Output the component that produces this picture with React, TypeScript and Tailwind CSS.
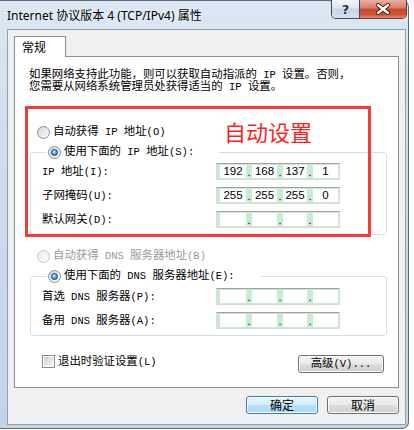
import { Fragment } from 'react';

const simsun = "font-['Liberation_Mono','Noto_Sans_CJK_SC',monospace] text-[11.4px] leading-[12px]";

function T({ s }: { s: string }) {
  const parts = s.split(/([\x20-\x7e]+)/);
  return (
    <>
      {parts.map((p, i) =>
        i % 2 === 1 ? (
          <span key={i} className="text-[10.5px]">
            {p}
          </span>
        ) : (
          <Fragment key={i}>{p}</Fragment>
        ),
      )}
    </>
  );
}

function Radio({ checked, disabled }: { checked?: boolean; disabled?: boolean }) {
  return (
    <span
      className={
        disabled
          ? 'flex h-[13px] w-[13px] shrink-0 items-center justify-center rounded-full border border-[#c4c6c8] bg-[linear-gradient(135deg,#ececec,#fbfbfb)]'
          : 'flex h-[13px] w-[13px] shrink-0 items-center justify-center rounded-full border border-[#8b8d90] bg-[linear-gradient(135deg,#d4d5d6,#fdfdfd)]'
      }
    >
      {checked && (
        <span className="h-[7px] w-[7px] rounded-full border border-[#173f6b] bg-[radial-gradient(circle_at_40%_35%,#d6f1ff_0%,#5aaef0_45%,#1d5fa6_100%)]" />
      )}
    </span>
  );
}

function IpBox({ v }: { v: string[] }) {
  const widths = ['w-[26px]', 'w-[25px]', 'w-[24px]', 'w-[25px]'];
  return (
    <div className="flex h-[17px] w-[124px] shrink-0 border border-[#dadada] border-t-[#a0a0a0] bg-[#c8ecd1] py-[1px] pl-[3px] pr-[1px]">
      {v.map((x, i) => (
        <Fragment key={i}>
          {i > 0 && (
            <span className="flex w-[6px] items-end justify-center font-['Liberation_Sans',sans-serif] text-[11px] leading-[12px] text-black">
              .
            </span>
          )}
          <span
            className={`${widths[i]} flex items-center justify-center bg-white font-['Liberation_Sans',sans-serif] text-[11.5px] leading-[13px] text-black`}
          >
            {x}
          </span>
        </Fragment>
      ))}
    </div>
  );
}

function Row({ label, v, first }: { label: string; v: string[]; first?: boolean }) {
  return (
    <div className={first ? 'flex h-[17px] items-center' : 'mt-[7px] flex h-[17px] items-center'}>
      <span className={`w-[174px] ${simsun} text-black`}>
        <T s={label} />
      </span>
      <IpBox v={v} />
    </div>
  );
}

const btnBase =
  "flex h-[18px] w-[72px] items-center justify-center rounded-[3px] border font-['Noto_Sans_CJK_SC',sans-serif] text-[12px] leading-[14px] text-black shadow-[inset_0_0_0_1px_#fbfbfb]";

export default function App() {
  return (
    <div className="relative h-[430px] w-[414px] overflow-hidden bg-white">
      <div className="flex h-[429px] w-[409px] flex-col rounded-tr-[7px] rounded-br-[7px] border-t border-r border-b border-[#5a6b80] bg-[linear-gradient(180deg,#dce7f3_0%,#cfdcec_35%,#c4d4e6_100%)]">
        {/* title bar */}
        <div className="flex h-[28px] items-start">
          <div className="flex h-[28px] items-center pl-[7px] pt-[1px] font-['Noto_Sans','Noto_Sans_CJK_SC',sans-serif] text-[12px] text-black [text-shadow:0_0_6px_#ffffff]">
            Internet 协议版本 4 (TCP/IPv4) 属性
          </div>
          <div className="ml-auto mr-[1px] -mt-[1px] flex h-[19px] overflow-hidden rounded-b-[5px] border border-t-0 border-[#3a4a5f]">
            <div className="flex w-[28px] items-center justify-center border-r border-[#3a4a5f] bg-[linear-gradient(180deg,#f3f6fa_0%,#dfe6ef_45%,#c8d4e2_50%,#d6e1ed_100%)] font-['DejaVu_Sans',sans-serif] text-[13px] font-bold leading-[13px] text-[#24313f] [text-shadow:0_0_2px_#ffffff]">
              ?
            </div>
            <div className="flex w-[46px] items-center justify-center bg-[linear-gradient(180deg,#eab0a3_0%,#dc7a66_45%,#c8462c_50%,#cf5238_80%,#e08a72_100%)]">
              <svg width="16" height="12" viewBox="0 0 16 12">
                <path d="M3 2 L13 10 M13 2 L3 10" stroke="#4a1a10" strokeWidth="4.2" strokeLinecap="round" />
                <path d="M3 2 L13 10 M13 2 L3 10" stroke="#ffffff" strokeWidth="2.4" strokeLinecap="round" />
              </svg>
            </div>
          </div>
        </div>

        {/* client area */}
        <div className="ml-[7px] flex h-[396px] w-[399px] flex-col border border-[#8fa0b5] bg-[#f0f0f0] px-[6px] pt-[6px] pb-[10px]">
          <div className="relative z-10 -mb-[1px] flex h-[21px] w-[52px] items-center border border-b-0 border-[#898c95] bg-white pl-[7px] font-['Noto_Sans_CJK_SC',sans-serif] text-[12px] leading-[14px] text-black">
            常规
          </div>
          <div className="flex h-[332px] flex-col border border-[#898c95] bg-white">
            {/* description */}
            <div className={`pl-[14px] pt-[12px] ${simsun} whitespace-nowrap text-black`}>
              <T s="如果网络支持此功能，则可以获取自动指派的 IP 设置。否则，" />
              <br />
              <T s="您需要从网络系统管理员处获得适当的 IP 设置。" />
            </div>

            {/* radio 1 */}
            <div className="mt-[31px] flex h-[16px] items-center gap-[3px] pl-[22px]">
              <Radio />
              <span className={`${simsun} text-black`}>
                <T s="自动获得 IP 地址(O)" />
              </span>
            </div>

            {/* group 1 */}
            <fieldset className="mt-[4px] ml-[15px] mr-[11px] rounded-[3px] border border-[#d5dfe5] pb-[6px] pl-[11px]">
              <legend className="ml-[5px] flex h-[16px] w-[172px] items-center gap-[3px] pl-[1px]">
                <Radio checked />
                <span className={`${simsun} text-black`}>
                  <T s="使用下面的 IP 地址(S):" />
                </span>
              </legend>
              <div className="mt-[3px] flex flex-col">
                <Row first label="IP 地址(I):" v={['192', '168', '137', '1']} />
                <Row label="子网掩码(U):" v={['255', '255', '255', '0']} />
                <Row label="默认网关(D):" v={['', '', '', '']} />
              </div>
            </fieldset>

            {/* radio 3 */}
            <div className="mt-[13px] flex h-[16px] items-center gap-[3px] pl-[22px]">
              <Radio disabled />
              <span className={`${simsun} text-[#9a9a9a]`}>
                <T s="自动获得 DNS 服务器地址(B)" />
              </span>
            </div>

            {/* group 2 */}
            <fieldset className="mt-[4px] ml-[15px] mr-[11px] rounded-[3px] border border-[#d5dfe5] pb-[6px] pl-[11px]">
              <legend className="ml-[5px] flex h-[16px] w-[214px] items-center gap-[3px] pl-[1px]">
                <Radio checked />
                <span className={`${simsun} text-black`}>
                  <T s="使用下面的 DNS 服务器地址(E):" />
                </span>
              </legend>
              <div className="mt-[4px] flex flex-col">
                <Row first label="首选 DNS 服务器(P):" v={['', '', '', '']} />
                <Row label="备用 DNS 服务器(A):" v={['', '', '', '']} />
              </div>
            </fieldset>

            {/* checkbox + advanced */}
            <div className="mt-[19px] flex items-start justify-between pl-[27px] pr-[14px]">
              <div className="flex h-[13px] items-center gap-[3px]">
                <span className="flex h-[13px] w-[13px] items-center justify-center border border-[#8b8d90] bg-white">
                  <span className="h-[9px] w-[9px] bg-[linear-gradient(135deg,#cfd0d1,#f7f7f7)]" />
                </span>
                <span className={`${simsun} text-black`}>
                  <T s="退出时验证设置(L)" />
                </span>
              </div>
              <div className="flex h-[18px] w-[86px] items-center justify-center rounded-[3px] border border-[#707070] bg-[linear-gradient(180deg,#f2f2f2_0%,#ebebeb_50%,#dddddd_50%,#cfcfcf_100%)] shadow-[inset_0_0_0_1px_#fbfbfb]">
                <span className={`${simsun} text-black`}>
                  <T s="高级(V)..." />
                </span>
              </div>
            </div>
          </div>

          {/* OK / Cancel */}
          <div className="mt-[8px] flex justify-end gap-[9px]">
            <div className={`${btnBase} border-[#3c7fb1] bg-[linear-gradient(180deg,#e5f4fc_0%,#d3eefb_50%,#b9e2f8_50%,#a9d9f4_100%)]`}>
              确定
            </div>
            <div className={`${btnBase} border-[#707070] bg-[linear-gradient(180deg,#f2f2f2_0%,#ebebeb_50%,#dddddd_50%,#cfcfcf_100%)]`}>
              取消
            </div>
          </div>
        </div>
      </div>

      {/* annotation overlay */}
      <div className="absolute left-[25px] top-[106px] h-[131px] w-[346px] border-[3px] border-[#f53a3a]" />
      <div className="absolute left-[224px] top-[118px] font-['Noto_Sans_CJK_SC',sans-serif] text-[22px] leading-[26px] text-[#ff1f1f]">
        自动设置
      </div>
    </div>
  );
}
